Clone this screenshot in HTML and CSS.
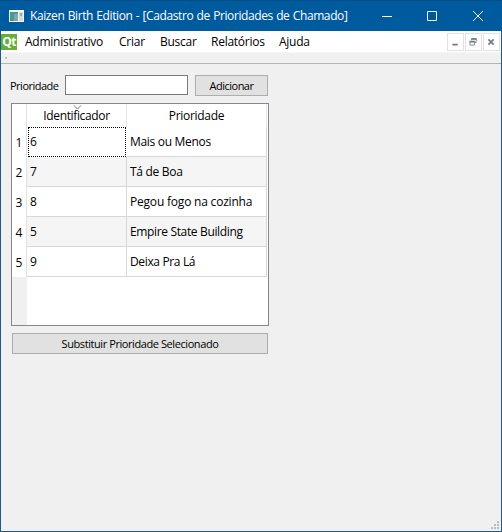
FILE: index.html
```html
<!DOCTYPE html>
<html lang="pt-BR">
<head>
<meta charset="utf-8">
<title>Kaizen Birth Edition</title>
<link rel="stylesheet" href="styles.css">
</head>
<body>
<div class="window">
  <header class="titlebar">
    <svg class="app-icon" width="15" height="12" viewBox="0 0 15 12" shape-rendering="crispEdges"><path fill="#f4f7f8" d="M0 0h15v12H0z"/><path fill="#4d9690" d="M1 2h8v9H1z"/><path fill="#80aaa5" d="M5 4h4v7H5z"/><path fill="#d5dadd" d="M10 2h4v9h-4z"/><path fill="#9baab5" d="M11 3h2v3h-2z"/></svg>
    <h1 class="title">Kaizen Birth Edition - [Cadastro de Prioridades de Chamado]</h1>
    <svg class="controls" width="104" height="12" viewBox="0 0 104 12" fill="none" stroke="#fff"><path d="M1 6.5h10M46.500 1.500h9v9h-9z"/><path d="M92 1l10 10M102 1L92 11"/></svg>
  </header>
  <nav class="menubar">
    <span class="qt">Qt</span>
    <span class="menu m-admin">Administrativo</span>
    <span class="menu m-criar">Criar</span>
    <span class="menu m-buscar">Buscar</span>
    <span class="menu m-rel">Relatórios</span>
    <span class="menu m-ajuda">Ajuda</span>
    <div class="mdi">
      <svg width="17" height="18" viewBox="0 0 17 18"><path d="M5 11h6v2H5z" fill="#737d88"/></svg>
      <svg width="17" height="18" viewBox="0 0 17 18" fill="none" stroke="#737d88"><path d="M6.500 7V5.500h5v4H10M4.500 8.500h5v4h-5z"/><path d="M6 5.500h6M4 8.500h6" stroke-width="2"/></svg>
      <svg width="17" height="18" viewBox="0 0 17 18"><path d="M5 6l6 6M11 6l-6 6" stroke="#737d88" stroke-width="2"/></svg>
    </div>
  </nav>
  <div class="toolbar"><i class="handle"></i></div>
  <main class="content">
    <div class="form">
      <label class="label" for="prio">Prioridade</label>
      <input class="field" id="prio" type="text">
      <button class="button add"><span>Adicionar</span></button>
    </div>
    <div class="table">
      <div class="row head">
        <span class="num"></span>
        <span class="id"><svg class="sort" width="9" height="5" viewBox="0 0 9 5" fill="none" stroke="#777"><path d="M1 .5l3.500 3.500L8 .5"/></svg><span class="h-id">Identificador</span></span>
        <span class="name"><span class="h-name">Prioridade</span></span>
      </div>
      <div class="row"><span class="num">1</span><span class="id focus">6</span><span class="name n1">Mais ou Menos</span></div>
      <div class="row alt"><span class="num">2</span><span class="id">7</span><span class="name n2">Tá de Boa</span></div>
      <div class="row"><span class="num">3</span><span class="id">8</span><span class="name n3">Pegou fogo na cozinha</span></div>
      <div class="row alt"><span class="num">4</span><span class="id">5</span><span class="name n4">Empire State Building</span></div>
      <div class="row"><span class="num">5</span><span class="id">9</span><span class="name n5">Deixa Pra Lá</span></div>
      <div class="rest"></div>
    </div>
    <button class="button replace"><span>Substituir Prioridade Selecionado</span></button>
  </main>
  <footer class="status">
    <svg width="9" height="9" viewBox="0 0 9 9" fill="#bcbcbc"><path d="M6 0h2v2H6zM3 3h2v2H3zM6 3h2v2H6zM0 6h2v2H0zM3 6h2v2H3zM6 6h2v2H6z"/></svg>
  </footer>
</div>
</body>
</html>
```
FILE: styles.css
```css
* { box-sizing: border-box; }
body { margin: 0; font: 12px/16px "Open Sans", "Noto Sans", sans-serif; color: #000; }
.window { width: 502px; height: 532px; display: flex; flex-direction: column; background: #f0f0f0; border: 1px solid #1c5a8a; border-top: 0; }
.titlebar { height: 31px; flex: none; margin: 0 -1px; padding: 0 20px 0 9px; display: flex; align-items: center; background: #005a9e; color: #fff; border-top: 1px solid #004d87; }
.title { margin: 0 auto 0 6px; font-size: 12px; font-weight: 400; line-height: 16px; letter-spacing: -.4px; word-spacing: .6px; white-space: nowrap; }
.controls { margin-right: -3px; }
.menubar { height: 21px; flex: none; display: flex; align-items: center; background: #fff; white-space: nowrap; }
.qt { width: 16px; height: 16px; background: #65ae3a; color: #fff; font: bold 12px/15px "Open Sans", sans-serif; letter-spacing: -.7px; text-align: center; margin-right: 8px; }
.menu { letter-spacing: -.25px; }
.m-admin { width: 94px; }
.m-criar { width: 41px; }
.m-buscar { width: 51px; }
.m-rel { width: 68px; }
.mdi { margin-left: auto; display: flex; gap: 1px; margin-right: 1px; }
.mdi svg { border: 1px solid #e2e2e2; }
.toolbar { height: 12px; flex: none; border-top: 1px solid #f6f6f6; border-bottom: 1px solid #b5b5b5; background: #f0f0f0; padding: 4px 0 0 4px; }
.handle { display: block; width: 2px; height: 2px; background: #c2c2c2; }
.content { flex: 1; padding: 11px 0 0 10px; }
.form { display: flex; height: 21px; align-items: center; margin-left: -1px; }
.label { width: 55px; font-size: 11px; letter-spacing: -.5px; white-space: nowrap; }
.field { width: 123px; height: 20px; margin: 0 7px 1px 0; padding: 0 3px; border: 1px solid #7a7a7a; background: #fff; font: inherit; }
.button { height: 21px; padding: 0; border: 1px solid #adadad; background: #e1e1e1; font: 11px/16px "Open Sans", "Noto Sans", sans-serif; color: #000; white-space: nowrap; }
.add { width: 73px; letter-spacing: -.5px; }
.table { width: 258px; height: 223px; margin-top: 7px; border: 1px solid #828790; background: #fff; display: flex; flex-direction: column; }
.row { display: flex; height: 30px; flex: none; line-height: 29px; white-space: nowrap; }
.num { width: 15px; border-right: 1px solid #e2e2e2; text-align: center; line-height: 31px; }
.id { width: 100px; padding-left: 3px; border-right: 1px solid #d8d8d8; border-bottom: 1px solid #d8d8d8; letter-spacing: -.3px; }
.name { width: 140px; padding-left: 3px; border-right: 1px solid #d8d8d8; border-bottom: 1px solid #d8d8d8; letter-spacing: -.3px; }
.n3 { letter-spacing: -.2px; }
.n4, .n5 { letter-spacing: -.35px; }
.alt .id, .alt .name { background: #f5f5f5; }
.focus { border: 1px dotted #000; padding-left: 1px; line-height: 28px; width: 98px; margin: 0 1px 0 1px; }
.head { height: 23px; line-height: 24px; text-align: center; }
.head .id, .head .name { position: relative; padding: 0; border-bottom: 0; border-color: #e5e5e5; }
.head .id { letter-spacing: -.35px; }
.sort { position: absolute; left: 46px; top: 1px; }
.rest { width: 15px; flex: 1; background: #f0f0f0; }
.replace { display: block; width: 256px; margin: 7px 0 0 1px; letter-spacing: -.42px; }
.status { height: 12px; display: flex; justify-content: flex-end; align-items: flex-end; padding: 0 1px 1px 0; }
```
